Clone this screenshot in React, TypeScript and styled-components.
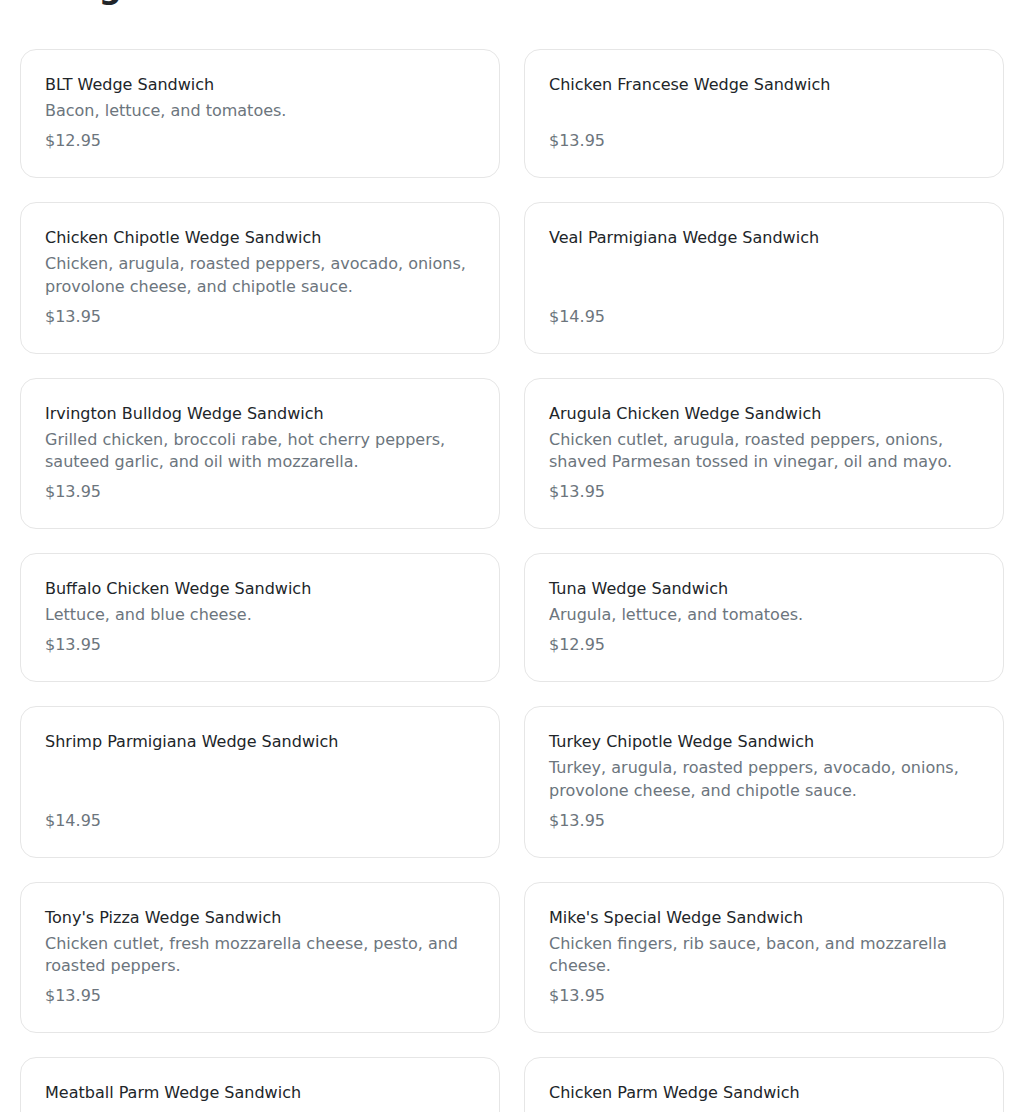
import styled, { createGlobalStyle } from "styled-components";

const GlobalStyle = createGlobalStyle`
  body {
    margin: 0;
    background: #ffffff;
    font-family: "DejaVu Sans", sans-serif;
    color: #212529;
  }
`;

const Page = styled.div`
  padding: 0 20px 40px 20px;
  overflow: hidden;
`;

const Heading = styled.h2`
  font-size: 32px;
  font-weight: bold;
  line-height: 1.2;
  margin: -32px 0 43px 0;
`;

const MenuGrid = styled.div`
  display: grid;
  grid-template-columns: 1fr 1fr;
  gap: 24px;
`;

const Card = styled.div`
  display: flex;
  flex-direction: column;
  border: 1px solid #e6e6e6;
  border-radius: 16px;
  padding: 25px 24px 24px 24px;
  background: #ffffff;
`;

const ItemName = styled.div`
  font-size: 16px;
  line-height: 20px;
  color: #212529;
  margin-bottom: 5px;
`;

const ItemDescription = styled.div`
  font-size: 16px;
  line-height: 22.5px;
  color: #6c757d;
  min-height: 22.5px;
`;

const ItemPrice = styled.div`
  font-size: 16px;
  line-height: 24px;
  color: #6c757d;
  margin-top: auto;
  padding-top: 6.5px;
`;

const items = [
  { name: "BLT Wedge Sandwich", description: "Bacon, lettuce, and tomatoes.", price: "$12.95" },
  { name: "Chicken Francese Wedge Sandwich", description: "", price: "$13.95" },
  {
    name: "Chicken Chipotle Wedge Sandwich",
    description: "Chicken, arugula, roasted peppers, avocado, onions, provolone cheese, and chipotle sauce.",
    price: "$13.95",
  },
  { name: "Veal Parmigiana Wedge Sandwich", description: "", price: "$14.95" },
  {
    name: "Irvington Bulldog Wedge Sandwich",
    description: "Grilled chicken, broccoli rabe, hot cherry peppers, sauteed garlic, and oil with mozzarella.",
    price: "$13.95",
  },
  {
    name: "Arugula Chicken Wedge Sandwich",
    description: "Chicken cutlet, arugula, roasted peppers, onions, shaved Parmesan tossed in vinegar, oil and mayo.",
    price: "$13.95",
  },
  { name: "Buffalo Chicken Wedge Sandwich", description: "Lettuce, and blue cheese.", price: "$13.95" },
  { name: "Tuna Wedge Sandwich", description: "Arugula, lettuce, and tomatoes.", price: "$12.95" },
  { name: "Shrimp Parmigiana Wedge Sandwich", description: "", price: "$14.95" },
  {
    name: "Turkey Chipotle Wedge Sandwich",
    description: "Turkey, arugula, roasted peppers, avocado, onions, provolone cheese, and chipotle sauce.",
    price: "$13.95",
  },
  {
    name: "Tony's Pizza Wedge Sandwich",
    description: "Chicken cutlet, fresh mozzarella cheese, pesto, and roasted peppers.",
    price: "$13.95",
  },
  {
    name: "Mike's Special Wedge Sandwich",
    description: "Chicken fingers, rib sauce, bacon, and mozzarella cheese.",
    price: "$13.95",
  },
  { name: "Meatball Parm Wedge Sandwich", description: "Meatballs with marinara sauce and mozzarella.", price: "$13.95" },
  { name: "Chicken Parm Wedge Sandwich", description: "Chicken cutlet with marinara sauce and mozzarella.", price: "$13.95" },
];

export default function App() {
  return (
    <>
      <GlobalStyle />
      <Page>
        <Heading>Wedges</Heading>
        <MenuGrid>
          {items.map((item) => (
            <Card key={item.name}>
              <ItemName>{item.name}</ItemName>
              <ItemDescription>{item.description}</ItemDescription>
              <ItemPrice>{item.price}</ItemPrice>
            </Card>
          ))}
        </MenuGrid>
      </Page>
    </>
  );
}
